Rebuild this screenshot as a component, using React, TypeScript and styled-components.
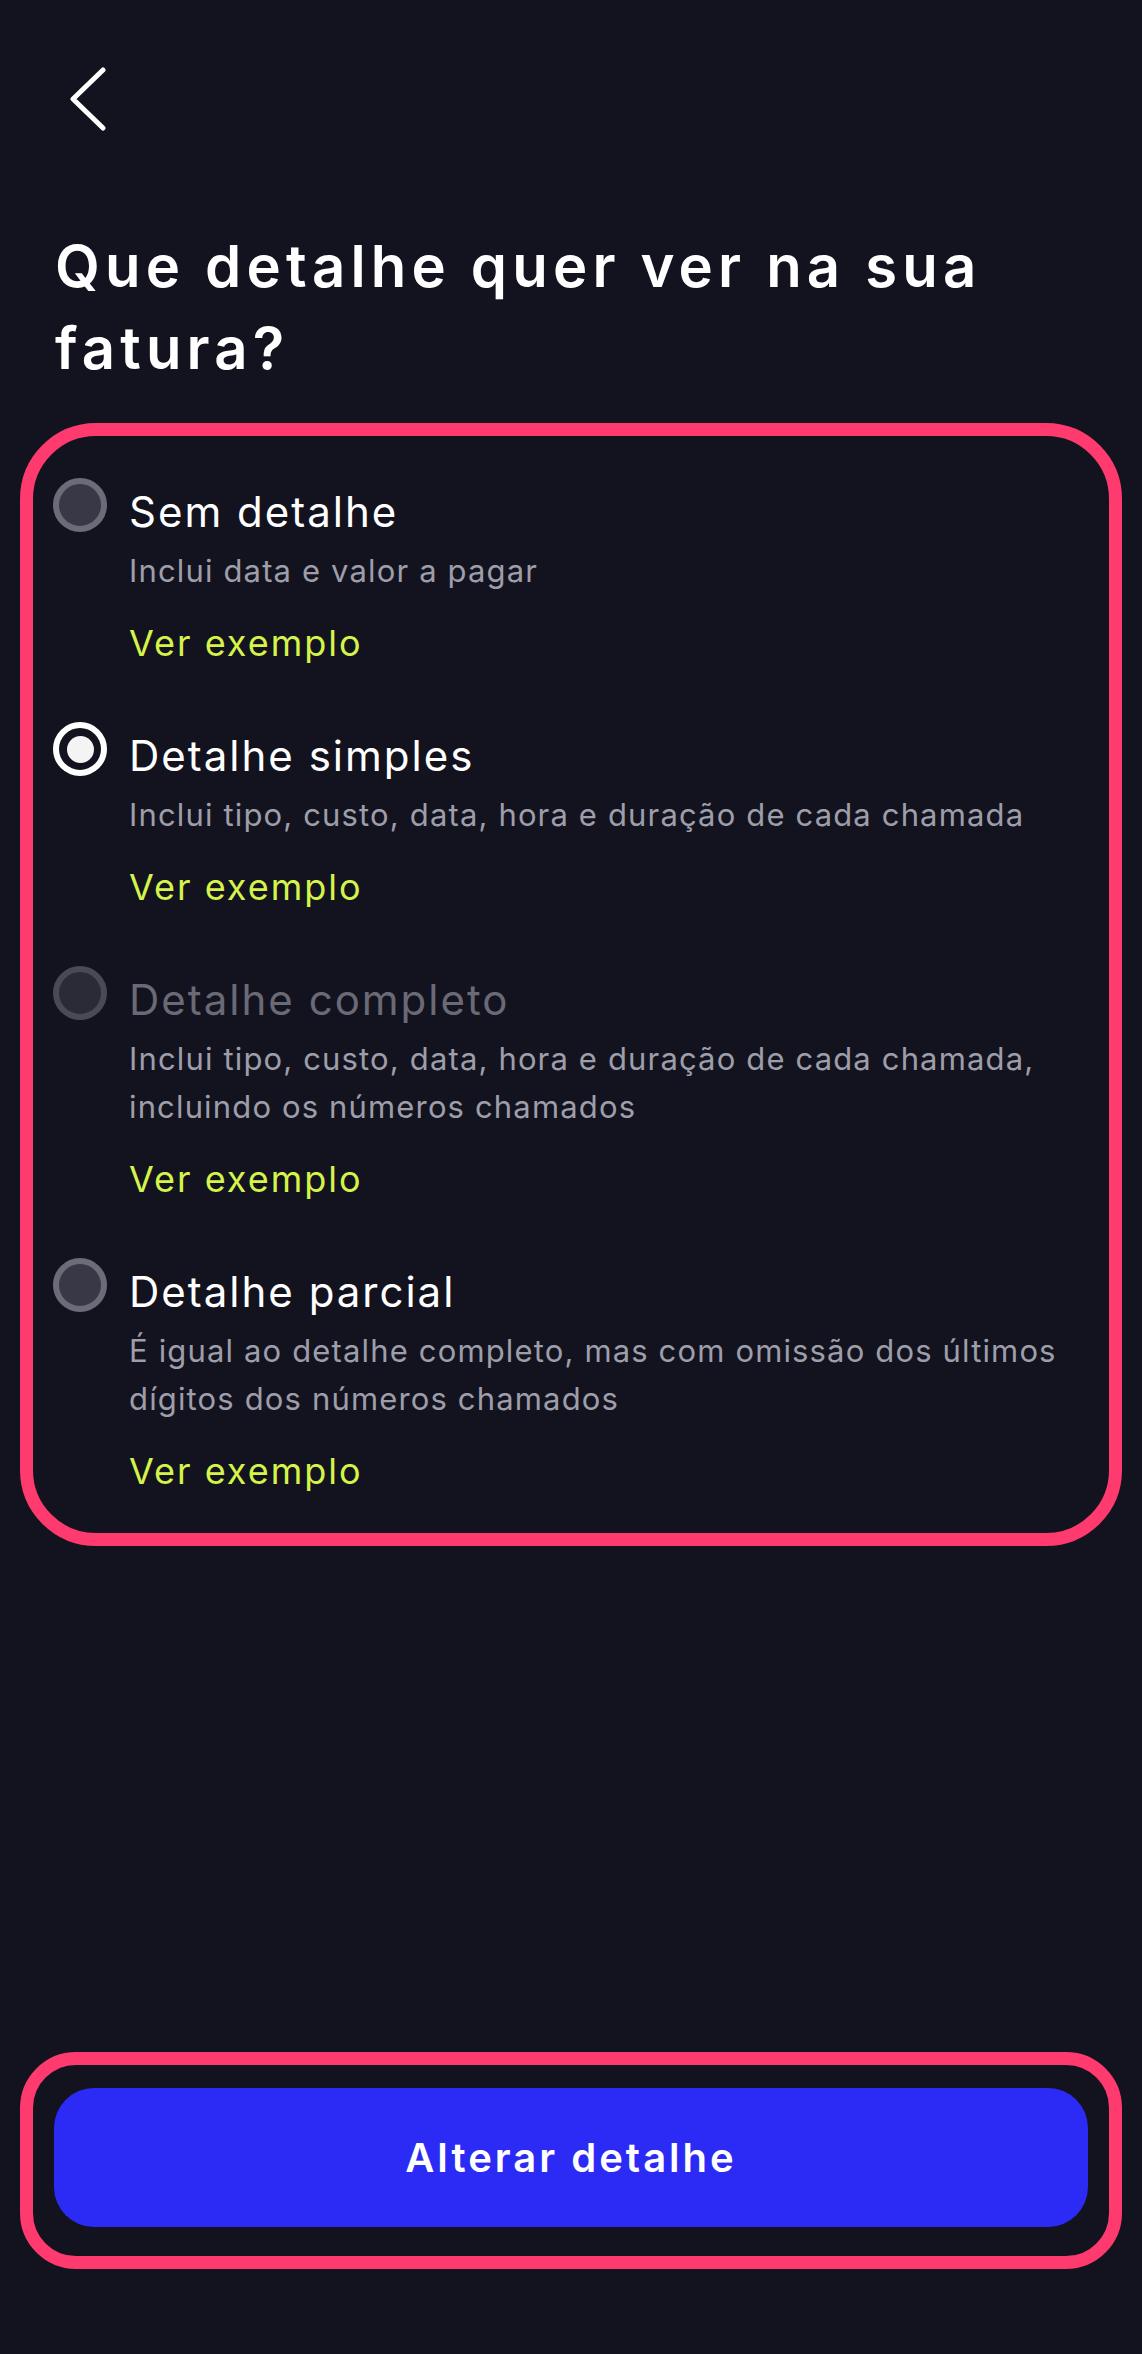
import React, { FC } from "react";
import styled, { createGlobalStyle } from "styled-components";

type Option = {
  id: string;
  title: string;
  lines: string[];
  disabled?: boolean;
};

const options: Option[] = [
  { id: "none", title: "Sem detalhe", lines: ["Inclui data e valor a pagar"] },
  {
    id: "simple",
    title: "Detalhe simples",
    lines: ["Inclui tipo, custo, data, hora e duração de cada chamada"],
  },
  {
    id: "full",
    title: "Detalhe completo",
    lines: [
      "Inclui tipo, custo, data, hora e duração de cada chamada,",
      "incluindo os números chamados",
    ],
    disabled: true,
  },
  {
    id: "partial",
    title: "Detalhe parcial",
    lines: [
      "É igual ao detalhe completo, mas com omissão dos últimos",
      "dígitos dos números chamados",
    ],
  },
];

const App: FC = () => {
  const selected = "simple";
  return (
    <>
      <GlobalStyle />
      <Page>
        <Header>
          <BackButton aria-label="Voltar">
            <svg width="40" height="64" viewBox="0 0 40 64" fill="none">
              <polyline
                points="35,3 5,32 35,61"
                stroke="#fff"
                strokeWidth="5"
                strokeLinecap="round"
                strokeLinejoin="round"
              />
            </svg>
          </BackButton>
        </Header>

        <Title>
          Que detalhe quer ver na sua
          <br />
          fatura?
        </Title>

        <Card>
          {options.map((o) => (
            <Row key={o.id}>
              <Radio $checked={o.id === selected} $disabled={o.disabled} />
              <Body>
                <OptionTitle $disabled={o.disabled}>{o.title}</OptionTitle>
                <Description>
                  {o.lines.map((l) => (
                    <span key={l}>{l}</span>
                  ))}
                </Description>
                <ExampleLink>Ver exemplo</ExampleLink>
              </Body>
            </Row>
          ))}
        </Card>

        <Spacer />

        <Footer>
          <PrimaryButton>Alterar detalhe</PrimaryButton>
        </Footer>
      </Page>
    </>
  );
};

const GlobalStyle = createGlobalStyle`
  body {
    margin: 0;
    background: #13131f;
    font-family: Inter, "Noto Sans", sans-serif;
    -webkit-font-smoothing: antialiased;
  }
`;

const Page = styled.div`
  width: 1142px;
  min-height: 2354px;
  box-sizing: border-box;
  display: flex;
  flex-direction: column;
  padding: 67px 20px 85px 20px;
  background: #13131f;
`;

const Header = styled.div`
  display: flex;
  padding-left: 48px;
`;

const BackButton = styled.button`
  background: none;
  border: 0;
  padding: 0;
  width: 40px;
  height: 64px;
  cursor: pointer;
`;

const Title = styled.h1`
  margin: 94px 0 34px 35px;
  color: #fff;
  font-size: 58px;
  line-height: 82px;
  font-weight: 600;
  letter-spacing: 5.2px;
`;

const Card = styled.div`
  border: 13px solid #ff3a6e;
  border-radius: 76px;
  padding: 42px 20px 38px 20px;
  display: flex;
  flex-direction: column;
  gap: 55px;
`;

const Row = styled.div`
  display: grid;
  grid-template-columns: 54px 1fr;
  column-gap: 22px;
  align-items: start;
`;

const Radio = styled.span<{ $checked?: boolean; $disabled?: boolean }>`
  box-sizing: border-box;
  width: 54px;
  height: 54px;
  border-radius: 50%;
  border: 6px solid ${(p) => (p.$checked ? "#fff" : p.$disabled ? "#4a4a56" : "#6c6c78")};
  background: ${(p) => (p.$checked ? "#13131f" : p.$disabled ? "#2b2b38" : "#383846")};
  display: flex;
  align-items: center;
  justify-content: center;

  &::after {
    content: "";
    display: ${(p) => (p.$checked ? "block" : "none")};
    width: 27px;
    height: 27px;
    border-radius: 50%;
    background: #f4f4f4;
  }
`;

const Body = styled.div`
  display: flex;
  flex-direction: column;
  padding-top: 8px;
`;

const OptionTitle = styled.div<{ $disabled?: boolean }>`
  color: ${(p) => (p.$disabled ? "#6a6a76" : "#fff")};
  font-size: 42px;
  line-height: 52px;
  font-weight: 400;
  letter-spacing: 2px;
`;

const Description = styled.div`
  margin-top: 9px;
  display: flex;
  flex-direction: column;
  color: #9e9eaa;
  font-size: 31px;
  line-height: 48px;
  font-weight: 400;
  letter-spacing: 1.15px;
  white-space: nowrap;
`;

const ExampleLink = styled.a`
  margin-top: 24px;
  color: #d6f34a;
  font-size: 36px;
  line-height: 48px;
  letter-spacing: 2px;
  cursor: pointer;
`;

const Spacer = styled.div`
  flex: 1;
`;

const Footer = styled.div`
  border: 13px solid #ff3a6e;
  border-radius: 56px;
  padding: 23px 21px 29px 21px;
`;

const PrimaryButton = styled.button`
  width: 100%;
  height: 139px;
  border: 0;
  border-radius: 40px;
  background: #2b2bf5;
  color: #fff;
  font-family: Inter, "Noto Sans", sans-serif;
  font-size: 40px;
  font-weight: 600;
  letter-spacing: 3px;
  cursor: pointer;
`;

export default App;
